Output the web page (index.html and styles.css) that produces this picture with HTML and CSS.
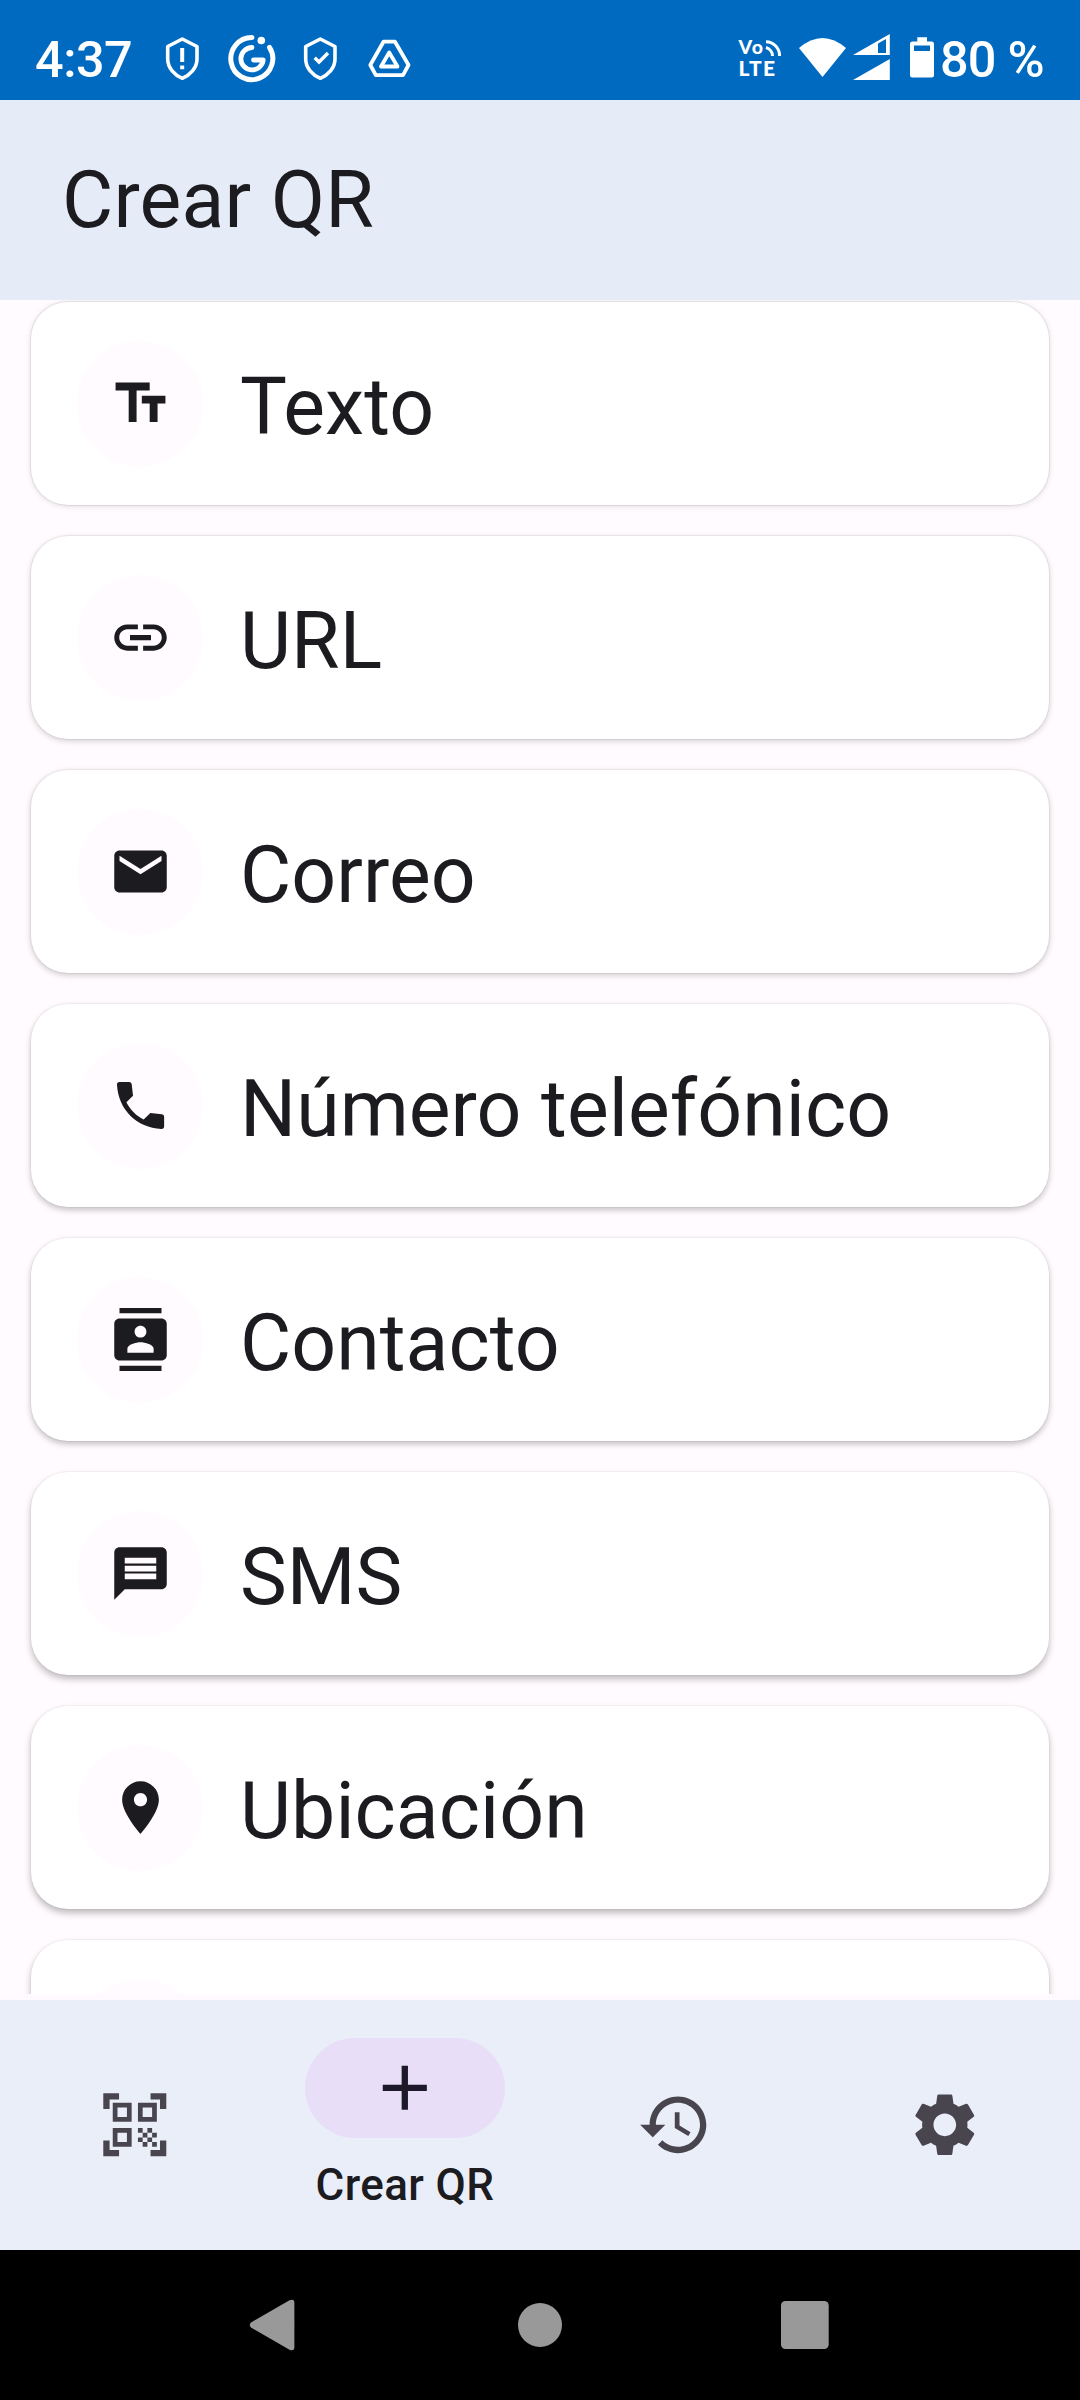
FILE: index.html
```html
<!DOCTYPE html>
<html lang="es">
<head>
<meta charset="utf-8">
<title>Crear QR</title>
<link rel="stylesheet" href="styles.css">
</head>
<body>
<div class="screen">
  <div class="status">
    <span class="clock">4:37</span>
    <svg class="status-left" width="248" height="50" viewBox="163 33 248 50" fill="none" stroke="#fff">
      <path d="M182.300 39 L197 46.500 V59 C197 68 190 75 182.300 78.300 C174.600 75 167.700 68 167.700 59 V46.500 Z" stroke-width="3.600" stroke-linejoin="round"/>
      <path d="M182.200 48 V62 M182.200 65.500 V69.300" stroke-width="4"/>
      <path d="M252 37.600 A21 21 0 1 0 269.500 47.300" stroke-width="5" stroke-linecap="round"/>
      <circle cx="261.300" cy="40.500" r="3.800" fill="#fff" stroke="none"/>
      <path d="M252 47.500 A11.200 11.200 0 1 0 263.200 60 H253.500" stroke-width="4.800" stroke-linecap="round" stroke-linejoin="round"/>
      <path d="M320.300 39 L335 46.500 V59 C335 68 328 75 320.300 78.300 C312.600 75 305.700 68 305.700 59 V46.500 Z" stroke-width="3.600" stroke-linejoin="round"/>
      <path d="M314.700 57.800 L319 62 L328 53" stroke-width="3.400"/>
      <path d="M383.500 41.700 H395 L408.500 65 L403 75.200 H375.800 L370.300 65 Z" stroke-width="3.800" stroke-linejoin="round"/>
      <path d="M389.200 52.500 L397.500 66.500 H381 Z" stroke-width="3.800" stroke-linejoin="round"/>
    </svg>
    <svg class="status-right" width="206" height="50" viewBox="736 33 206 50" fill="#fff">
      <g fill="none" stroke="#fff">
        <path d="M766 47.500 A9 9 0 0 1 772.500 56 M766 41.700 A14 14 0 0 1 779.600 56" stroke-width="3"/>
      </g>
      <text class="volte-top" x="738.500" y="54" textLength="24.500">Vo</text>
      <text class="volte-bottom" x="738.500" y="76" textLength="36.500">LTE</text>
      <path d="M799 48 Q822.500 28 846 48 L822.500 77 Z"/>
      <path fill-rule="evenodd" d="M853 55 L889.800 34 V55 Z M878 43.500 V53 H886 V39 Z"/>
      <path d="M853 80 L889.800 59 V80 Z"/>
      <path fill-rule="evenodd" d="M917.300 37.300 H927 V41.500 H931.500 Q934 41.500 934 44 V75 Q934 77.500 931.500 77.500 H912.500 Q910 77.500 910 75 V44 Q910 41.500 912.500 41.500 H917.300 Z M914 45.500 V51 H930 V45.500 Z"/>
    </svg>
    <span class="battery">80 %</span>
  </div>

  <header class="topbar"><h1 class="title">Crear QR</h1></header>

  <main class="list">
    <div class="card shade-1">
      <span class="badge"><svg class="icon" viewBox="0 0 24 24"><path d="M2.500 4v3h5v12h3V7h5V4h-13zm19 5h-9v3h3v7h3v-7h3V9z"/></svg></span>
      <span class="label">Texto</span>
    </div>
    <div class="card shade-2">
      <span class="badge"><svg class="icon" viewBox="0 0 24 24"><path d="M3.900 12c0-1.710 1.390-3.100 3.100-3.100h4V7H7c-2.760 0-5 2.240-5 5s2.240 5 5 5h4v-1.900H7c-1.710 0-3.100-1.390-3.100-3.100zM8 13h8v-2H8v2zm9-6h-4v1.900h4c1.710 0 3.100 1.390 3.100 3.100s-1.390 3.100-3.100 3.100h-4V17h4c2.760 0 5-2.240 5-5s-2.240-5-5-5z"/></svg></span>
      <span class="label">URL</span>
    </div>
    <div class="card shade-3">
      <span class="badge"><svg class="icon" viewBox="0 0 24 24"><path d="M20 4H4c-1.100 0-1.990.9-1.990 2L2 18c0 1.100.9 2 2 2h16c1.100 0 2-.9 2-2V6c0-1.100-.9-2-2-2zm0 4l-8 5-8-5V6l8 5 8-5v2z"/></svg></span>
      <span class="label">Correo</span>
    </div>
    <div class="card shade-4">
      <span class="badge"><svg class="icon" viewBox="0 0 24 24"><path d="M20.100 15.350l-4.350-.5-2.540 2.520c-2.830-1.440-5.150-3.750-6.590-6.590l2.530-2.530-.5-4.350c-.06-.5-.4-.9-1-.9H4c-.6 0-1 .4-.97 1C3.500 13.500 10.500 20.500 20 20.970c.6.030 1-.37 1-.97v-3.650c0-.6-.4-.95-.9-1z"/></svg></span>
      <span class="label">Número telefónico</span>
    </div>
    <div class="card shade-5">
      <span class="badge"><svg class="icon" viewBox="0 0 24 24"><path d="M20 0H4v2h16V0zM4 24h16v-2H4v2zM20 4H4c-1.100 0-2 .9-2 2v12c0 1.100.9 2 2 2h16c1.100 0 2-.9 2-2V6c0-1.100-.9-2-2-2zm-8 2.750c1.240 0 2.250 1.010 2.250 2.250s-1.010 2.250-2.250 2.250S9.750 10.240 9.750 9 10.760 6.750 12 6.750zM17 17H7v-1.500c0-1.670 3.330-2.500 5-2.500s5 .83 5 2.500V17z"/></svg></span>
      <span class="label">Contacto</span>
    </div>
    <div class="card shade-6">
      <span class="badge"><svg class="icon" viewBox="0 0 24 24"><path d="M20 2H4c-1.100 0-1.990.9-1.990 2L2 22l4-4h14c1.100 0 2-.9 2-2V4c0-1.100-.9-2-2-2zM6 6h12v2.200H6zM6 9h12v2.200H6zM6 12h12v2.200H6z" fill-rule="evenodd"/></svg></span>
      <span class="label">SMS</span>
    </div>
    <div class="card shade-7">
      <span class="badge"><svg class="icon" viewBox="0 0 24 24"><path d="M12 2C8.130 2 5 5.130 5 9c0 5.250 7 13 7 13s7-7.750 7-13c0-3.870-3.130-7-7-7zm0 9.500c-1.380 0-2.500-1.120-2.500-2.500s1.120-2.500 2.500-2.500 2.500 1.120 2.500 2.500-1.120 2.500-2.500 2.500z"/></svg></span>
      <span class="label">Ubicación</span>
    </div>
    <div class="card shade-7"><span class="badge"></span></div>
  </main>

  <nav class="tabs">
    <div class="tab"><svg class="tab-icon" viewBox="0 0 24 24"><path d="M9.500 6.500v3h-3v-3h3M11 5H5v6h6V5zm-1.500 9.500v3h-3v-3h3M11 13H5v6h6v-6zm6.500-6.500v3h-3v-3h3M19 5h-6v6h6V5zm-6 8h1.500v1.500H13V13zm1.500 1.500H16V16h-1.500v-1.500zM16 13h1.500v1.500H16V13zm-3 3h1.500v1.500H13V16zm1.500 1.500H16V19h-1.500v-1.500zM16 16h1.500v1.500H16V16zm1.500-1.500H19V16h-1.500v-1.500zm0 3H19V19h-1.500v-1.500zM22 7h-2V4h-3V2h5v5zm0 15v-5h-2v3h-3v2h5zM2 22h5v-2H4v-3H2v5zM2 2v5h2V4h3V2H2z"/></svg></div>
    <div class="tab active">
      <span class="pill"><svg class="tab-icon" viewBox="0 0 24 24"><path d="M19 13h-6v6h-2v-6H5v-2h6V5h2v6h6v2z"/></svg></span>
      <span class="tab-label">Crear QR</span>
    </div>
    <div class="tab"><svg class="tab-icon" viewBox="0 0 24 24"><path d="M13 3c-4.970 0-9 4.030-9 9H1l3.890 3.890.07.14L9 12H6c0-3.870 3.130-7 7-7s7 3.130 7 7-3.130 7-7 7c-1.930 0-3.680-.79-4.940-2.060l-1.420 1.420C8.270 19.990 10.510 21 13 21c4.970 0 9-4.030 9-9s-4.030-9-9-9zm-1 5v5l4.280 2.540.72-1.210-3.500-2.080V8H12z"/></svg></div>
    <div class="tab"><svg class="tab-icon" viewBox="0 0 24 24"><path d="M19.140 12.940c.04-.3.06-.61.06-.94 0-.32-.02-.64-.07-.94l2.030-1.580c.18-.14.23-.41.12-.61l-1.920-3.320c-.12-.22-.37-.29-.59-.22l-2.390.96c-.5-.38-1.030-.7-1.620-.94L14.400 2.810c-.04-.24-.24-.41-.48-.41h-3.840c-.24 0-.43.17-.47.41L9.250 5.350C8.660 5.590 8.120 5.920 7.630 6.290L5.240 5.330c-.22-.08-.47 0-.59.22L2.740 8.870c-.12.21-.08.47.12.61l2.030 1.580C4.840 11.360 4.800 11.690 4.800 12s.02.64.07.94l-2.030 1.580c-.18.14-.23.41-.12.61l1.920 3.320c.12.22.37.29.59.22l2.390-.96c.5.38 1.030.7 1.620.94l.36 2.540c.05.24.24.41.48.41h3.840c.24 0 .44-.17.47-.41l.36-2.540c.59-.24 1.130-.56 1.620-.94l2.390.96c.22.08.47 0 .59-.22l1.920-3.320c.12-.22.07-.47-.12-.61L19.140 12.940zM12 15.600c-1.980 0-3.600-1.620-3.600-3.600s1.620-3.600 3.600-3.600 3.600 1.620 3.600 3.600-1.620 3.600-3.600 3.600z"/></svg></div>
  </nav>

  <div class="sysnav">
    <svg width="580" height="52" viewBox="249 2299 580 52" fill="#999">
      <path d="M251 2322.500 L289.500 2300.300 Q294.400 2298.500 294.400 2303 V2347 Q294.400 2351.500 289.500 2349.700 L251 2327.500 Q248.500 2325 251 2322.500 Z"/>
      <circle cx="540" cy="2325" r="22"/>
      <rect x="781" y="2301" width="47.700" height="48" rx="4.500"/>
    </svg>
  </div>
</div>
</body>
</html>
```
FILE: styles.css
```css
* {
  box-sizing: border-box;
}

body {
  margin: 0;
  font-family: Roboto, sans-serif;
  color: #1c1b1f;
}

.screen {
  width: 1080px;
  height: 2400px;
  display: flex;
  flex-direction: column;
  overflow: hidden;
  background: #fffbff;
}

.status {
  height: 100px;
  flex: none;
  display: flex;
  padding: 33px 0 0 35px;
  background: #006ac1;
  color: #fff;
}

.clock,
.battery {
  height: 60px;
  font-size: 50.4px;
  font-weight: 500;
  line-height: 54px;
  letter-spacing: -.5px;
  white-space: nowrap;
}

.clock {
  width: 128px;
}

.status-right {
  flex: none;
  margin-left: 325px;
}

.battery {
  margin-left: -2px;
  letter-spacing: -.8px;
}

.volte-top {
  font: 900 19.5px Lato, sans-serif;
}

.volte-bottom {
  font: 900 21px Lato, sans-serif;
}

.topbar {
  height: 200px;
  flex: none;
  padding: 54px 0 0 62px;
  background: #e5ecf8;
}

.title {
  margin: 0;
  font-size: 78.75px;
  font-weight: 400;
  line-height: 92px;
  letter-spacing: .15px;
}

.list {
  height: 1694px;
  flex: none;
  display: flex;
  flex-direction: column;
  gap: 31px;
  padding: 2px 31px 0;
  overflow: hidden;
}

.card {
  height: 203px;
  flex: none;
  display: flex;
  align-items: center;
  gap: 37px;
  padding-left: 46px;
  border-radius: 37px;
  background: #fff;
}

.shade-1 { box-shadow: 0 0 1px 1px rgba(0, 0, 0, .08), 0 1px 6px rgba(0, 0, 0, .13); }
.shade-2 { box-shadow: 0 0 1px 1px rgba(0, 0, 0, .06), 0 2px 6px rgba(0, 0, 0, .18); }
.shade-3 { box-shadow: 0 0 1px 1px rgba(0, 0, 0, .05), 0 2px 6px rgba(0, 0, 0, .21); }
.shade-4 { box-shadow: 0 0 1px 1px rgba(0, 0, 0, .04), 0 3px 6px rgba(0, 0, 0, .23); }
.shade-5 { box-shadow: 0 0 1px 1px rgba(0, 0, 0, .03), 0 3px 6px rgba(0, 0, 0, .25); }
.shade-6 { box-shadow: 0 0 1px 1px rgba(0, 0, 0, .03), 0 4px 7px rgba(0, 0, 0, .26); }
.shade-7 { box-shadow: 0 0 1px 1px rgba(0, 0, 0, .03), 0 4px 7px rgba(0, 0, 0, .27); }

.badge {
  width: 126px;
  height: 126px;
  flex: none;
  display: flex;
  align-items: center;
  justify-content: center;
  border-radius: 50%;
  background: #fffbff;
}

.icon {
  width: 63px;
  height: 63px;
  fill: #1c1b1f;
}

.label {
  padding-top: 7px;
  font-size: 78.75px;
  line-height: 92px;
  letter-spacing: .05px;
  white-space: nowrap;
}

.tabs {
  height: 256px;
  flex: none;
  display: flex;
  border-top: 6px solid #fffaff;
  background: #e9eef9;
}

.tab {
  flex: 1;
  display: flex;
  flex-direction: column;
  align-items: center;
  justify-content: center;
}

.tab.active {
  justify-content: flex-start;
  padding-top: 38px;
}

.pill {
  width: 200px;
  height: 100px;
  display: flex;
  align-items: center;
  justify-content: center;
  border-radius: 50px;
  background: #e8def8;
}

.tab-icon {
  width: 75.6px;
  height: 75.6px;
  fill: #49454f;
}

.active .tab-icon {
  fill: #1d192b;
}

.tab-label {
  margin-top: 22px;
  font-size: 44px;
  font-weight: 500;
  line-height: 51px;
  letter-spacing: .4px;
}

.sysnav {
  height: 150px;
  flex: none;
  display: flex;
  align-items: center;
  padding-left: 249px;
  background: #000;
}
```
